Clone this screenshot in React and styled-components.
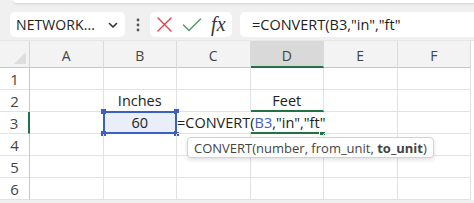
import React from "react"
import styled, { createGlobalStyle } from "styled-components"

const GlobalStyle = createGlobalStyle`
  html, body {
    margin: 0;
    padding: 0;
    background: #ffffff;
    font-family: "Open Sans", "Noto Sans", sans-serif;
    overflow: hidden;
  }
`

const COL_W = 73.5
const ROW_H = 22

const Shell = styled.div`
  width: 474px;
  height: 203px;
  display: flex;
  flex-direction: column;
  background: #f0f0f0;
  overflow: hidden;
`

const Ribbon = styled.div`
  height: 3px;
  margin-left: 13px;
  background: #ffffff;
  border-bottom: 1px solid #dcdcdc;
  border-bottom-left-radius: 5px;
  box-shadow: 0 1px 2px rgba(0, 0, 0, 0.06);
`

const FormulaRow = styled.div`
  display: flex;
  align-items: center;
  height: 25px;
  margin-top: 8px;
  padding-left: 10px;
`

const Pill = styled.div`
  height: 25px;
  box-sizing: border-box;
  background: #ffffff;
  border-radius: 5px;
  display: flex;
  align-items: center;
`

const NameBox = styled(Pill)`
  width: 115px;
  padding: 0 6px;
  justify-content: space-between;
  font-size: 14px;
  color: #222;
  letter-spacing: 0.1px;
`

const Dots = styled.div`
  width: 25px;
  display: flex;
  justify-content: center;
`

const IconBox = styled(Pill)`
  width: 82px;
  justify-content: space-around;
  padding: 0 2px;
`

const FxLabel = styled.span`
  font-family: "Liberation Serif", "DejaVu Serif", serif;
  font-style: italic;
  font-size: 20px;
  color: #333;
  line-height: 1;
  margin-top: -2px;
`

const FormulaInput = styled(Pill)`
  flex: 1;
  margin-left: 8px;
  padding-left: 12px;
  border-radius: 5px 0 0 5px;
  font-size: 14.5px;
  color: #222;
`

const Sheet = styled.div`
  position: relative;
  margin-top: 3px;
  display: grid;
  grid-template-columns: 30px repeat(6, ${COL_W}px);
  grid-template-rows: 27px repeat(6, ${ROW_H}px);
  background: #ffffff;
  border-top: 1px solid #e6e6e6;
`

const Corner = styled.div`
  background: #f3f3f3;
  border-right: 1px solid #d4d4d4;
  border-bottom: 1px solid #c8c8c8;
  position: relative;
  &::after {
    content: "";
    position: absolute;
    right: 3px;
    bottom: 3px;
    width: 0;
    height: 0;
    border-left: 12px solid transparent;
    border-bottom: 12px solid #dedede;
  }
`

const ColHead = styled.div`
  box-sizing: border-box;
  background: ${(p) => (p.active ? "#d9d9d9" : "#f3f3f3")};
  border-right: 1px solid #dadada;
  border-bottom: ${(p) => (p.active ? "2px solid #217346" : "1px solid #c8c8c8")};
  display: flex;
  align-items: center;
  justify-content: center;
  font-size: 14px;
  color: #444;
  padding-top: 3px;
`

const RowHead = styled.div`
  box-sizing: border-box;
  background: #ffffff;
  border-right: ${(p) => (p.active ? "2px solid #217346" : "1px solid #c8c8c8")};
  border-bottom: 1px solid #e2e2e2;
  display: flex;
  align-items: center;
  justify-content: center;
  font-size: 15px;
  color: #444;
`

const Cell = styled.div`
  position: relative;
  box-sizing: border-box;
  border-right: 1px solid #e2e2e2;
  border-bottom: ${(p) => (p.underline ? "2px solid #217346" : "1px solid #e2e2e2")};
  display: flex;
  align-items: center;
  justify-content: center;
  font-size: 14.5px;
  color: #222;
  white-space: nowrap;
`

const RefCell = styled(Cell)`
  background: #e9eef8;
  border: 2px solid #3b5fc4;
  margin: -1px 0 0 -1px;
`

const Handle = styled.span`
  position: absolute;
  width: 5px;
  height: 5px;
  background: #3b5fc4;
  left: ${(p) => (p.right ? "auto" : "-4px")};
  right: ${(p) => (p.right ? "-4px" : "auto")};
  top: ${(p) => (p.bottom ? "auto" : "-4px")};
  bottom: ${(p) => (p.bottom ? "-4px" : "auto")};
`

const EditCell = styled(Cell)`
  justify-content: flex-start;
  overflow: visible;
  z-index: 2;
`

const EditText = styled.span`
  background: #ffffff;
  position: relative;
  z-index: 2;
`

const Ref = styled.span`
  color: #3b5fc4;
`

const ActiveCell = styled(Cell)`
  border-bottom: 2px solid #217346;
  &::after {
    content: "";
    position: absolute;
    right: -3px;
    bottom: -4px;
    width: 5px;
    height: 5px;
    background: #217346;
    border: 1px solid #fff;
  }
`

const Tooltip = styled.div`
  position: absolute;
  left: 187px;
  top: 96px;
  height: 21px;
  box-sizing: border-box;
  padding: 0 6px;
  display: flex;
  align-items: center;
  background: #ffffff;
  border: 1px solid #d2d2d2;
  border-radius: 4px;
  box-shadow: 0 2px 4px rgba(0, 0, 0, 0.12);
  font-size: 13px;
  color: #444;
  white-space: pre;
  z-index: 5;
`

const Chevron = () => (
  <svg width="12" height="12" viewBox="0 0 12 12">
    <path d="M2.5 4.5 L6 8 L9.5 4.5" fill="none" stroke="#333" strokeWidth="1.6" strokeLinecap="round" strokeLinejoin="round" />
  </svg>
)

const VDots = () => (
  <svg width="4" height="14" viewBox="0 0 4 14">
    <circle cx="2" cy="2" r="1.4" fill="#555" />
    <circle cx="2" cy="7" r="1.4" fill="#555" />
    <circle cx="2" cy="12" r="1.4" fill="#555" />
  </svg>
)

const Cross = () => (
  <svg width="17" height="17" viewBox="0 0 17 17">
    <path d="M2 2 L15 15 M15 2 L2 15" stroke="#e0414a" strokeWidth="1.4" strokeLinecap="round" />
  </svg>
)

const Check = () => (
  <svg width="20" height="16" viewBox="0 0 20 16">
    <path d="M1.5 8 L7 13.5 L18.5 2" fill="none" stroke="#4c9a62" strokeWidth="1.4" strokeLinecap="round" strokeLinejoin="round" />
  </svg>
)

const cols = ["A", "B", "C", "D", "E", "F"]

const App = () => {
  const renderRow = (r) => {
    const cells = cols.map((c) => {
      const key = `${c}${r}`
      if (key === "B2") return <Cell key={key}>Inches</Cell>
      if (key === "D2") return <Cell key={key} underline>Feet</Cell>
      if (key === "B3")
        return (
          <RefCell key={key}>
            60
            <Handle />
            <Handle right />
            <Handle bottom />
            <Handle right bottom />
          </RefCell>
        )
      if (key === "C3")
        return (
          <EditCell key={key}>
            <EditText>
              =CONVERT(<Ref>B3</Ref>,"in","ft"
            </EditText>
          </EditCell>
        )
      if (key === "D3") return <ActiveCell key={key} />
      return <Cell key={key} />
    })
    return [
      <RowHead key={`r${r}`} active={r === 3}>
        {r}
      </RowHead>,
      ...cells,
    ]
  }

  return (
    <Shell>
      <GlobalStyle />
      <Ribbon />
      <FormulaRow>
        <NameBox>
          <span>NETWORK...</span>
          <Chevron />
        </NameBox>
        <Dots>
          <VDots />
        </Dots>
        <IconBox>
          <Cross />
          <Check />
          <FxLabel>fx</FxLabel>
        </IconBox>
        <FormulaInput>=CONVERT(B3,"in","ft"</FormulaInput>
      </FormulaRow>
      <Sheet>
        <Corner />
        {cols.map((c) => (
          <ColHead key={c} active={c === "D"}>
            {c}
          </ColHead>
        ))}
        {[1, 2, 3, 4, 5, 6].map(renderRow)}
        <Tooltip>
          {"CONVERT(number, from_unit, "}
          <b>to_unit</b>
          {")"}
        </Tooltip>
      </Sheet>
    </Shell>
  )
}

export default App
